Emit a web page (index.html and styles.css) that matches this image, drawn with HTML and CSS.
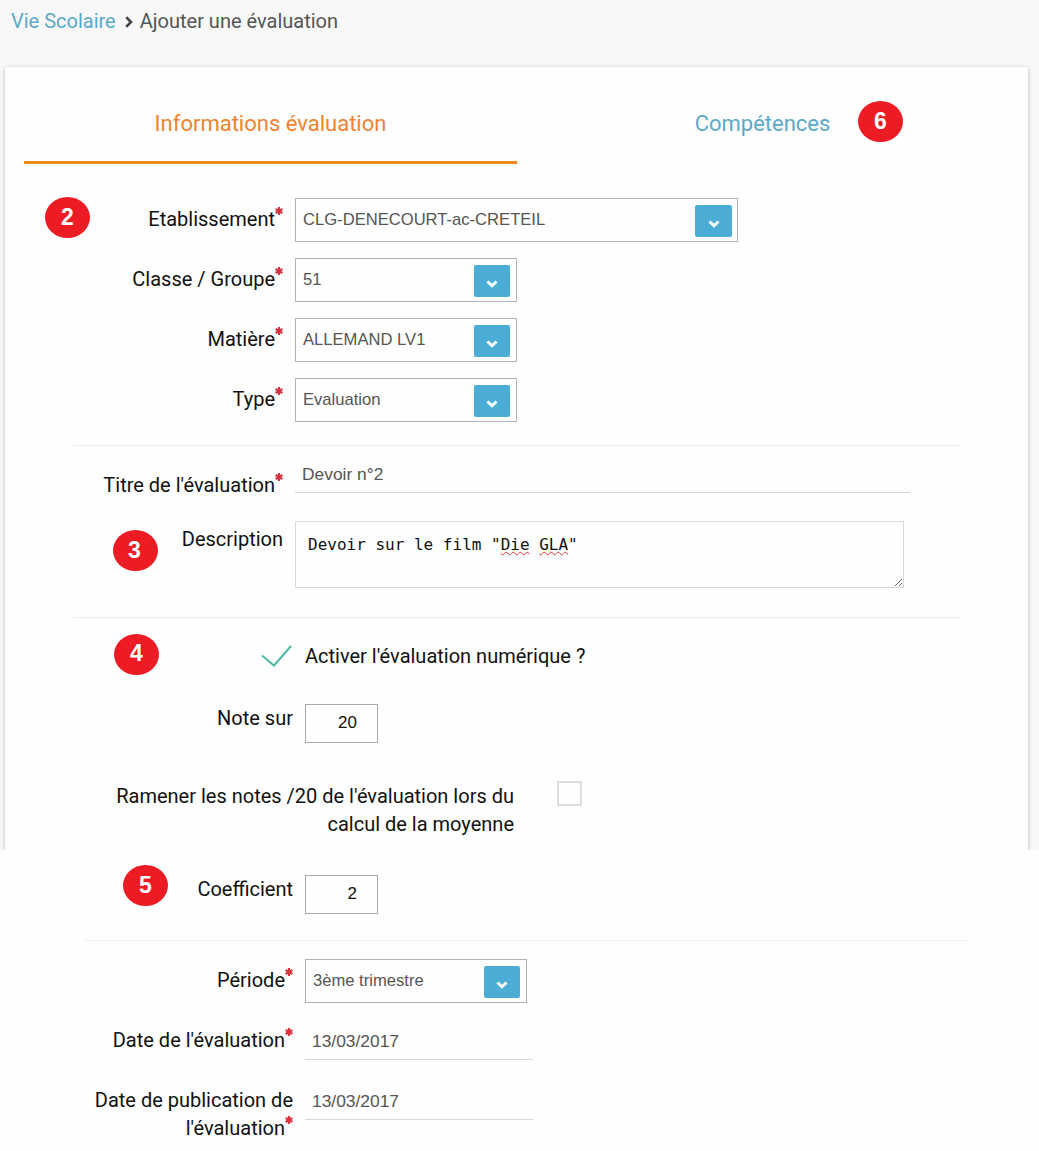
FILE: index.html
```
<!DOCTYPE html>
<html lang="fr">
<head>
<meta charset="utf-8">
<title>Ajouter une évaluation</title>
<link rel="stylesheet" href="styles.css">
</head>
<body>
<svg class="defs" aria-hidden="true">
  <symbol id="chevron" viewBox="0 0 12 8"><path d="M1.500 1.500 6 5.800 10.500 1.500" fill="none" stroke="currentColor" stroke-width="2.900"/></symbol>
  <symbol id="star" viewBox="0 0 8 8"><path d="M4 0v8M.6 2l6.8 4M.6 6l6.8-4" fill="none" stroke="currentColor" stroke-width="2.100"/></symbol>
</svg>
<div class="app">
  <header class="breadcrumb">
    <a class="crumb-link">Vie Scolaire</a>
    <svg class="crumb-sep" viewBox="0 0 8 12"><path d="M1.200 1.200 6 6 1.200 10.800" fill="none" stroke="currentColor" stroke-width="2.600"/></svg>
    <span class="crumb-current">Ajouter une évaluation</span>
  </header>
  <main class="card">
    <nav class="tabs">
      <a class="tab active"><span>Informations évaluation</span></a>
      <a class="tab"><span>Compétences</span></a>
    </nav>
    <section class="group selects">
      <div class="row"><label class="label">Etablissement<svg class="star"><use href="#star"/></svg></label>
        <div class="select wide"><span>CLG-DENECOURT-ac-CRETEIL</span><i class="arrow"><svg><use href="#chevron"/></svg></i></div></div>
      <div class="row"><label class="label">Classe / Groupe<svg class="star"><use href="#star"/></svg></label>
        <div class="select"><span>51</span><i class="arrow"><svg><use href="#chevron"/></svg></i></div></div>
      <div class="row"><label class="label">Matière<svg class="star"><use href="#star"/></svg></label>
        <div class="select"><span>ALLEMAND LV1</span><i class="arrow"><svg><use href="#chevron"/></svg></i></div></div>
      <div class="row"><label class="label">Type<svg class="star"><use href="#star"/></svg></label>
        <div class="select"><span>Evaluation</span><i class="arrow"><svg><use href="#chevron"/></svg></i></div></div>
    </section>
    <section class="group texts">
      <div class="row title-row"><label class="label">Titre de l'évaluation<svg class="star"><use href="#star"/></svg></label>
        <div class="line-input title-input">Devoir n°2</div></div>
      <div class="row"><label class="label description-label">Description</label>
        <div class="textarea">Devoir sur le film "<span class="misspelt">Die</span> <span class="misspelt">GLA</span>"
          <svg class="grip" viewBox="0 0 8 8"><path d="M1 8 8 1M5 8 8 5" stroke="#666" fill="none"/></svg></div></div>
    </section>
    <section class="group numeric">
      <div class="activate">
        <svg class="check" viewBox="0 0 32 24"><path d="M2 11.500 14 21.500 31 2" fill="none" stroke="#4fb9a8" stroke-width="2"/></svg>
        <span class="wide-text">Activer l'évaluation numérique ?</span>
      </div>
      <div class="row shifted"><label class="label">Note sur</label><div class="number">20</div></div>
      <div class="rescale"><label class="label">Ramener les notes /20 de l'évaluation lors du<br>calcul de la moyenne</label><span class="checkbox"></span></div>
    </section>
  </main>
</div>
<section class="lower">
  <div class="row shifted"><label class="label">Coefficient</label><div class="number">2</div></div>
  <div class="group dates">
    <div class="row shifted"><label class="label">Période<svg class="star"><use href="#star"/></svg></label>
      <div class="select"><span>3ème trimestre</span><i class="arrow"><svg><use href="#chevron"/></svg></i></div></div>
    <div class="row shifted"><label class="label">Date de l'évaluation<svg class="star"><use href="#star"/></svg></label>
      <div class="line-input date">13/03/2017</div></div>
    <div class="row shifted"><label class="label">Date de publication de<br>l'évaluation<svg class="star"><use href="#star"/></svg></label>
      <div class="line-input date">13/03/2017</div></div>
  </div>
</section>
<span class="badge b2">2</span>
<span class="badge b3">3</span>
<span class="badge b4">4</span>
<span class="badge b5">5</span>
<span class="badge b6">6</span>
</body>
</html>
```
FILE: styles.css
```
* { box-sizing: border-box; }
body { position: relative; margin: 0; width: 1039px; height: 1151px; overflow: hidden; background: #fefefe; color: #111; font: 20px/28px Roboto, sans-serif; }
.defs { display: none; }
svg { display: block; }
.app { height: 850px; overflow: hidden; background: #f8f8f8; }
.breadcrumb { display: flex; align-items: center; height: 67px; padding: 0 0 25px 11px; color: #555; }
.crumb-link { color: #5aa9c9; }
.crumb-sep { width: 8px; height: 12px; margin: 2px 7px 0 9px; color: #444; }
.card { width: 1023px; height: 800px; margin-left: 5px; background: #fefefe; box-shadow: 0 1px 4px rgba(0, 0, 0, .25); }
.tabs { display: flex; height: 97px; margin: 0 18px 0 19px; }
.tab { width: 493px; color: #5aa9c9; text-align: center; font-size: 22px; line-height: 114px; }
.tab:last-child { padding-right: 2px; }
.tab.active { border-bottom: 3px solid #ee8a1d; color: #ee8330; }
.row { display: flex; align-items: flex-start; gap: 12px; }
.label { width: 278px; flex: none; padding-top: 7px; text-align: right; white-space: nowrap; }
.star { display: inline-block; width: 8px; height: 8px; vertical-align: 11px; color: #d8343f; }
.shifted .label { width: 288px; }
.selects { display: flex; flex-direction: column; gap: 16px; padding-top: 34px; height: 281px; }
.select { display: flex; justify-content: space-between; width: 222px; height: 44px; padding: 6px 6px 0 7px; border: 1px solid #b0b2b5; color: #555; font: 16.6px/28px "Liberation Sans", Arial, sans-serif; }
.select span { padding-top: 1px; }
.select.wide { width: 443px; padding-right: 5px; }
.arrow { display: flex; justify-content: center; width: 36px; height: 32px; padding-top: 15px; border-radius: 2px; background: #4badd5; color: #fff; }
.wide .arrow { width: 37px; }
.arrow svg { width: 12px; height: 8px; }
.texts, .numeric { margin-left: 68px; border-top: 1px solid #eee; width: 887px; }
.texts { height: 172px; }
.texts .label { width: 210px; }
.title-row { height: 75px; }
.title-row .label { padding-top: 25px; }
.line-input { color: #555; border-bottom: 1px solid #d8d8d8; font: 17.4px/24px "Liberation Sans", Arial, sans-serif; padding-left: 7px; }
.title-input { width: 615px; height: 47px; padding-top: 16px; }
.description-label { padding-top: 4px; }
.textarea { position: relative; width: 609px; height: 67px; padding: 10px 12px; border: 1px solid #d8d8d8; white-space: nowrap; font: 16px/26px "DejaVu Sans Mono", monospace; }
.misspelt { text-decoration: underline wavy #d33 1px; text-underline-offset: 1px; text-decoration-skip-ink: none; }
.grip { position: absolute; right: 1px; bottom: 1px; width: 8px; height: 8px; }
.activate { display: flex; align-items: center; height: 86px; padding: 0 0 11px 187px; gap: 13px; }
.check { width: 32px; height: 24px; }
.numeric .shifted .label { width: 220px; padding-top: 0; }
.number { width: 73px; height: 39px; padding-right: 20px; border: 1px solid #aaa; text-align: right; font: 17px/35px "Liberation Sans", Arial, sans-serif; }
.rescale { display: flex; padding-top: 38px; gap: 43px; }
.rescale .label { width: 441px; padding-top: 1px; }
.checkbox { width: 25px; height: 25px; border: 2px solid #ddd; }
.lower { padding: 25px 0 0 5px; }
.lower > .row .label { padding-top: 0; }
.dates { display: flex; flex-direction: column; gap: 16px; width: 885px; margin: 26px 0 0 79px; padding-top: 18px; border-top: 1px solid #eee; }
.dates .label { width: 209px; }
.dates .row { height: 44px; }
.date { width: 228px; height: 41px; padding-top: 10px; }
.badge { position: absolute; width: 45px; height: 41px; border-radius: 50%; background: #ed1c24; color: #fff; text-align: center; font: bold 23px/41px "Liberation Sans", Arial, sans-serif; }
.b2 { left: 45px; top: 197px; }
.b3 { left: 113px; top: 530px; padding-right: 2px; }
.b4 { left: 114px; top: 634px; line-height: 39px; }
.b5 { left: 123px; top: 865px; line-height: 40px; }
.b6 { left: 858px; top: 101px; }
```
